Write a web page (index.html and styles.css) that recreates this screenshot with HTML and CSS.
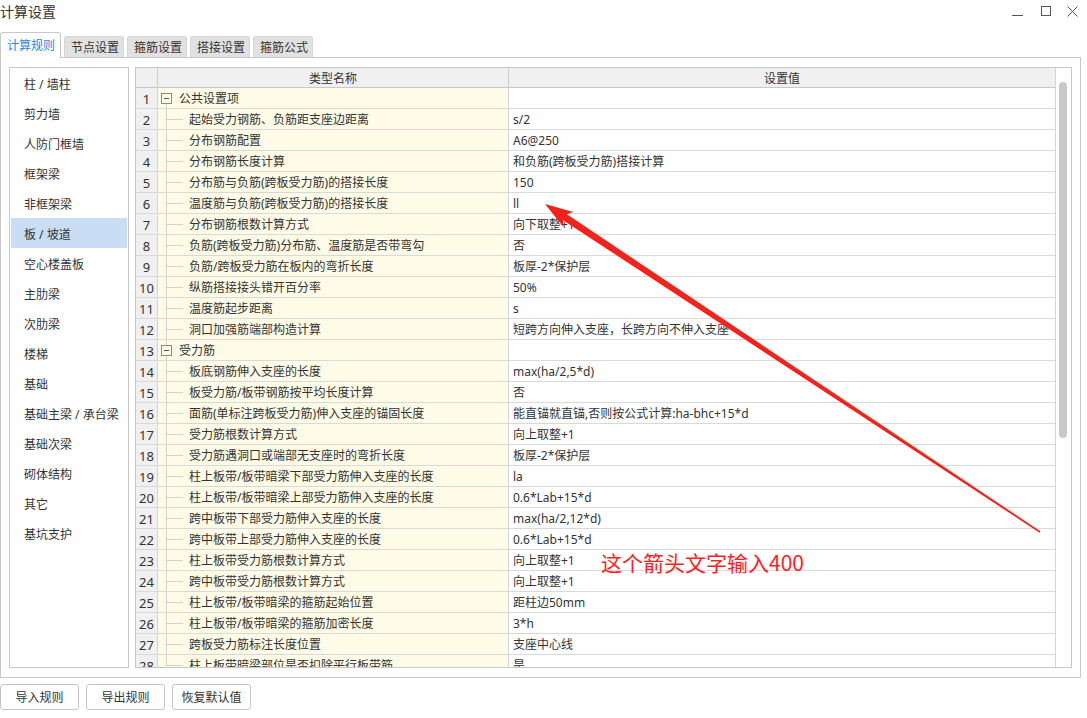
FILE: index.html
```html
<!DOCTYPE html>
<html lang="zh-CN">
<head>
<meta charset="utf-8">
<title>计算设置</title>
<link rel="stylesheet" href="styles.css">
</head>
<body>
<div class="window">
  <div class="titlebar">
    <div class="title">计算设置</div>
    <div class="controls">
      <svg class="ic ic-min" width="11" height="11" viewBox="0 0 11 11"><path d="M0 9.5H11" stroke="#555" stroke-width="1"/></svg>
      <svg class="ic ic-max" width="11" height="11" viewBox="0 0 11 11"><rect x="0.5" y="0.5" width="9" height="9" fill="none" stroke="#555" stroke-width="1"/></svg>
      <svg class="ic ic-close" width="11" height="11" viewBox="0 0 11 11"><path d="M0.5 0.5L10.5 10.5M10.5 0.5L0.5 10.5" stroke="#555" stroke-width="1"/></svg>
    </div>
  </div>

  <div class="tabs">
    <div class="tab active">计算规则</div>
    <div class="tab">节点设置</div>
    <div class="tab">箍筋设置</div>
    <div class="tab">搭接设置</div>
    <div class="tab">箍筋公式</div>
  </div>

  <div class="panel">
    <ul class="side">
      <li>柱 / 墙柱</li>
      <li>剪力墙</li>
      <li>人防门框墙</li>
      <li>框架梁</li>
      <li>非框架梁</li>
      <li class="sel">板 / 坡道</li>
      <li>空心楼盖板</li>
      <li>主肋梁</li>
      <li>次肋梁</li>
      <li>楼梯</li>
      <li>基础</li>
      <li>基础主梁 / 承台梁</li>
      <li>基础次梁</li>
      <li>砌体结构</li>
      <li>其它</li>
      <li>基坑支护</li>
    </ul>

    <div class="grid">
      <div class="table">
        <div class="row head"><div class="num"></div><div class="name">类型名称</div><div class="val">设置值</div></div>
        <div class="row"><div class="num">1</div><div class="name group first"><span class="tree"><span class="box"></span></span>公共设置项</div><div class="val"></div></div>
        <div class="row"><div class="num">2</div><div class="name"><span class="tree"></span>起始受力钢筋、负筋距支座边距离</div><div class="val">s/2</div></div>
        <div class="row"><div class="num">3</div><div class="name"><span class="tree"></span>分布钢筋配置</div><div class="val">A6@250</div></div>
        <div class="row"><div class="num">4</div><div class="name"><span class="tree"></span>分布钢筋长度计算</div><div class="val">和负筋(跨板受力筋)搭接计算</div></div>
        <div class="row"><div class="num">5</div><div class="name"><span class="tree"></span>分布筋与负筋(跨板受力筋)的搭接长度</div><div class="val">150</div></div>
        <div class="row"><div class="num">6</div><div class="name"><span class="tree"></span>温度筋与负筋(跨板受力筋)的搭接长度</div><div class="val">ll</div></div>
        <div class="row"><div class="num">7</div><div class="name"><span class="tree"></span>分布钢筋根数计算方式</div><div class="val">向下取整+1</div></div>
        <div class="row"><div class="num">8</div><div class="name"><span class="tree"></span>负筋(跨板受力筋)分布筋、温度筋是否带弯勾</div><div class="val">否</div></div>
        <div class="row"><div class="num">9</div><div class="name"><span class="tree"></span>负筋/跨板受力筋在板内的弯折长度</div><div class="val">板厚-2*保护层</div></div>
        <div class="row"><div class="num">10</div><div class="name"><span class="tree"></span>纵筋搭接接头错开百分率</div><div class="val">50%</div></div>
        <div class="row"><div class="num">11</div><div class="name"><span class="tree"></span>温度筋起步距离</div><div class="val">s</div></div>
        <div class="row"><div class="num">12</div><div class="name"><span class="tree"></span>洞口加强筋端部构造计算</div><div class="val">短跨方向伸入支座，长跨方向不伸入支座</div></div>
        <div class="row"><div class="num">13</div><div class="name group"><span class="tree"><span class="box"></span></span>受力筋</div><div class="val"></div></div>
        <div class="row"><div class="num">14</div><div class="name"><span class="tree"></span>板底钢筋伸入支座的长度</div><div class="val">max(ha/2,5*d)</div></div>
        <div class="row"><div class="num">15</div><div class="name"><span class="tree"></span>板受力筋/板带钢筋按平均长度计算</div><div class="val">否</div></div>
        <div class="row"><div class="num">16</div><div class="name"><span class="tree"></span>面筋(单标注跨板受力筋)伸入支座的锚固长度</div><div class="val">能直锚就直锚,否则按公式计算:ha-bhc+15*d</div></div>
        <div class="row"><div class="num">17</div><div class="name"><span class="tree"></span>受力筋根数计算方式</div><div class="val">向上取整+1</div></div>
        <div class="row"><div class="num">18</div><div class="name"><span class="tree"></span>受力筋遇洞口或端部无支座时的弯折长度</div><div class="val">板厚-2*保护层</div></div>
        <div class="row"><div class="num">19</div><div class="name"><span class="tree"></span>柱上板带/板带暗梁下部受力筋伸入支座的长度</div><div class="val">la</div></div>
        <div class="row"><div class="num">20</div><div class="name"><span class="tree"></span>柱上板带/板带暗梁上部受力筋伸入支座的长度</div><div class="val">0.6*Lab+15*d</div></div>
        <div class="row"><div class="num">21</div><div class="name"><span class="tree"></span>跨中板带下部受力筋伸入支座的长度</div><div class="val">max(ha/2,12*d)</div></div>
        <div class="row"><div class="num">22</div><div class="name"><span class="tree"></span>跨中板带上部受力筋伸入支座的长度</div><div class="val">0.6*Lab+15*d</div></div>
        <div class="row"><div class="num">23</div><div class="name"><span class="tree"></span>柱上板带受力筋根数计算方式</div><div class="val">向上取整+1</div></div>
        <div class="row"><div class="num">24</div><div class="name"><span class="tree"></span>跨中板带受力筋根数计算方式</div><div class="val">向上取整+1</div></div>
        <div class="row"><div class="num">25</div><div class="name"><span class="tree"></span>柱上板带/板带暗梁的箍筋起始位置</div><div class="val">距柱边50mm</div></div>
        <div class="row"><div class="num">26</div><div class="name"><span class="tree"></span>柱上板带/板带暗梁的箍筋加密长度</div><div class="val">3*h</div></div>
        <div class="row"><div class="num">27</div><div class="name"><span class="tree"></span>跨板受力筋标注长度位置</div><div class="val">支座中心线</div></div>
        <div class="row"><div class="num">28</div><div class="name"><span class="tree last"></span>柱上板带暗梁部位是否扣除平行板带筋</div><div class="val">是</div></div>
      </div>
      <div class="track"><div class="thumb"></div></div>
    </div>
  </div>

  <div class="buttons">
    <button class="btn">导入规则</button>
    <button class="btn">导出规则</button>
    <button class="btn">恢复默认值</button>
  </div>
</div>

<svg class="arrow" width="1087" height="718" viewBox="0 0 1087 718">
  <polygon fill="#f5221b" points="545,204 563.4,227 563.1,220.2 1039.6,532.7 1040.4,531.3 566.9,214.3 573.3,212"/>
</svg>
<div class="note">这个箭头文字输入400</div>
</body>
</html>
```

FILE: styles.css
```css
* { box-sizing: border-box; }

html, body {
  margin: 0;
  padding: 0;
  background: #fff;
  overflow: hidden;
}

body {
  width: 1087px;
  height: 718px;
  font-family: "Noto Sans", "Noto Sans CJK SC", sans-serif;
  font-size: 12px;
  color: #333;
  position: relative;
}

.window {
  display: flex;
  flex-direction: column;
  width: 1087px;
  height: 718px;
}

/* title bar */
.titlebar {
  height: 32px;
  display: flex;
  justify-content: space-between;
  align-items: flex-start;
}

.title {
  font-size: 14px;
  line-height: 24px;
  padding-left: 0;
  color: #333;
}

.controls {
  display: flex;
  padding-top: 6px;
  padding-right: 9px;
}

.ic { display: block; }
.ic-max { margin-left: 18px; }
.ic-close { margin-left: 15px; }

/* tabs */
.tabs {
  height: 25px;
  display: flex;
  align-items: flex-end;
  position: relative;
  z-index: 1;
}

.tab {
  height: 21px;
  margin-left: 3px;
  padding: 0 6px;
  width: 60px;
  background: #e1e1e1;
  border: 1px solid #d6d6d6;
  border-bottom: none;
  border-radius: 3px 3px 0 0;
  line-height: 22px;
  text-align: center;
  color: #333;
  white-space: nowrap;
}

.tab.active {
  margin-left: 0;
  width: 61px;
  height: 26px;
  margin-bottom: -1px;
  background: #fff;
  border-color: #c8c8c8;
  color: #2b84e0;
  line-height: 26px;
}

/* panel */
.panel {
  height: 621px;
  width: 1081px;
  border: 1px solid #c8c8c8;
  padding: 9px 8px 9px 8px;
  display: flex;
  gap: 6px;
}

.side {
  list-style: none;
  margin: 0;
  padding: 0;
  width: 120px;
  height: 601px;
  border: 1px solid #c8c8c8;
  background: #fff;
}

.side li {
  height: 30px;
  line-height: 33px;
  padding-left: 13px;
  margin: 0 1px;
  white-space: nowrap;
  color: #333;
  overflow: hidden;
}

.side li.sel {
  background: #c9def4;
}

/* grid */
.grid {
  flex: 1;
  height: 601px;
  border: 1px solid #c8c8c8;
  display: flex;
  overflow: hidden;
}

.table {
  flex: 1;
  overflow: hidden;
}

.row {
  display: grid;
  grid-template-columns: 22px 351px 1fr;
  height: 21px;
  border-bottom: 1px solid #d9d9d9;
}

.row > div {
  height: 20px;
  line-height: 22px;
  white-space: nowrap;
  overflow: hidden;
}

.num {
  background: #f0f0f0;
  border-right: 1px solid #d4d4d4;
  text-align: center;
  font-size: 13px;
  color: #333;
}

.name {
  background: #fefbe6;
  border-right: 1px solid #d4d4d4;
  display: flex;
  align-items: center;
  padding-top: 1px;
}

.val {
  background: #fff;
  padding-left: 4px;
}

.row.head {
  height: 20px;
  border-bottom: 1px solid #c8c8c8;
}

.row.head > div {
  height: 19px;
  line-height: 21px;
  background: #f0f0f0;
  text-align: center;
  display: block;
  padding: 0;
  border-right-color: #cfcfcf;
}

.tree {
  display: inline-block;
  flex: none;
  width: 31px;
  height: 20px;
  margin-top: -1px;
  background-image:
    linear-gradient(#d2d2d2, #d2d2d2),
    linear-gradient(#d2d2d2, #d2d2d2);
  background-repeat: no-repeat;
  background-position: 8px 0, 8px 10px;
  background-size: 1px 20px, 17px 1px;
}

.tree.last {
  background-size: 1px 11px, 17px 1px;
}

.group .tree {
  width: 21px;
  display: flex;
  align-items: center;
  background-image: linear-gradient(#d2d2d2, #d2d2d2);
  background-position: 8px 0;
  background-size: 1px 20px;
}

.group.first .tree {
  background-position: 8px 15px;
  background-size: 1px 5px;
}

.box {
  display: block;
  width: 11px;
  height: 11px;
  margin-left: 3px;
  border: 1px solid #8a8a8a;
  background:
    linear-gradient(#555, #555) center / 5px 1px no-repeat,
    #fefbe6;
}

/* scrollbar */
.track {
  width: 16px;
  flex: none;
  border-left: 1px solid #d4d4d4;
  background: #fff;
  padding-top: 14px;
}

.thumb {
  width: 8px;
  height: 356px;
  margin-left: 3px;
  background: #c9c9c9;
  border-radius: 4px;
}

/* buttons */
.buttons {
  display: flex;
  gap: 7px;
  margin-top: 6px;
}

.btn {
  width: 79px;
  height: 26px;
  padding: 2px 0 0;
  border: 1px solid #c6c6c6;
  border-radius: 3px;
  background: #fff;
  font-family: "Noto Sans", "Noto Sans CJK SC", sans-serif;
  font-size: 12px;
  color: #333;
  line-height: 22px;
}

/* annotation overlay */
.arrow {
  position: absolute;
  left: 0;
  top: 0;
  pointer-events: none;
}

.note {
  position: absolute;
  left: 601px;
  top: 549px;
  font-size: 21px;
  line-height: 26px;
  color: #ff1d1d;
  white-space: nowrap;
  font-family: "Noto Sans CJK SC", "Noto Sans", sans-serif;
}
```
